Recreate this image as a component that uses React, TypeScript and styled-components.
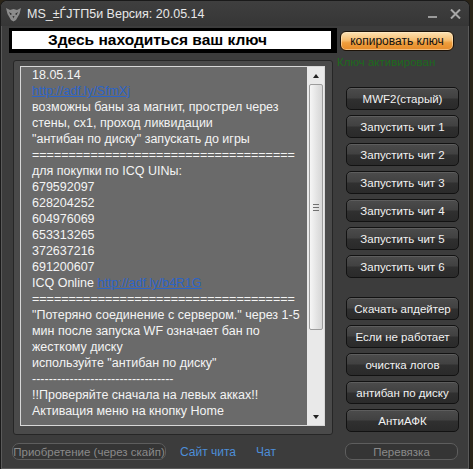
import React from 'react'
import styled, { createGlobalStyle } from 'styled-components'

const Global = createGlobalStyle`
    html, body {
        margin: 0;
        padding: 0;
        background: #2a2418;
    }
    #root {
        width: 473px;
        height: 469px;
        overflow: hidden;
    }
`

const Window = styled.div`
    width: 470px;
    height: 469px;
    box-sizing: border-box;
    background: #3c3c3c;
    border: 1px solid #1a1a1a;
    border-bottom: none;
    border-radius: 7px 7px 0 0;
    box-shadow: inset 0 0 0 1px #5a5a5a;
    display: flex;
    flex-direction: column;
    overflow: hidden;
    font-family: "Liberation Sans", Arial, sans-serif;
`

const TitleBar = styled.div`
    height: 25px;
    display: flex;
    align-items: center;
    padding: 0 8px 0 4px;
    background: linear-gradient(#3f3f3f, #363636);
    color: #e8e8e8;
    font-size: 12.5px;
    .title{
        margin-left: 5px;
        margin-top: 1px;
    }
    .ctrls{
        margin-left: auto;
        display: flex;
        align-items: center;
        gap: 13px;
        color: #a0a0a0;
    }
`

const Body = styled.div`
    flex: 1;
    display: flex;
    flex-direction: column;
    padding: 2px 0 0 8px;
`

const MainRow = styled.div`
    display: flex;
`

const LeftCol = styled.div`
    width: 328px;
    display: flex;
    flex-direction: column;
`

const KeyField = styled.div`
    height: 25px;
    box-sizing: border-box;
    background: #fff;
    border-style: solid;
    border-color: #000;
    border-width: 3px 6px 4px 3px;
    display: flex;
    align-items: center;
    padding-left: 36px;
    font-weight: bold;
    font-size: 15.5px;
    color: #000;
`

const TextFrame = styled.div`
    margin: 7px 0 0 4px;
    width: 320px;
    height: 375px;
    box-sizing: border-box;
    border: 1px solid #262626;
    border-radius: 3px;
    background: #4a4a4a;
    padding: 5px 7px 8px 6px;
    display: flex;
`

const TextArea = styled.div`
    flex: 1;
    display: flex;
    border: 1px solid #d8d8d8;
    background: #6a6a6a;
    overflow: hidden;
`

const Content = styled.div`
    flex: 1;
    padding: 0 0 0 11px;
    font-size: 12.5px;
    line-height: 16px;
    color: #f4f4f4;
    white-space: nowrap;
    p{
        margin: 0;
    }
    a{
        color: #2c64c8;
        text-decoration: underline;
    }
`

const ScrollBar = styled.div`
    width: 17px;
    background: #e9e9e9;
    display: flex;
    flex-direction: column;
    align-items: center;
`

const Arrow = styled.div<{ $down?: boolean }>`
    height: 17px;
    width: 17px;
    display: flex;
    align-items: center;
    justify-content: center;
    &::after{
        content: '';
        border-left: 3.5px solid transparent;
        border-right: 3.5px solid transparent;
        ${p => p.$down ? 'border-top: 4px solid #222;' : 'border-bottom: 4px solid #222;'}
    }
`

const Thumb = styled.div`
    width: 14px;
    height: 246px;
    box-sizing: border-box;
    border: 1px solid #9c9c9c;
    border-radius: 2px;
    background: linear-gradient(90deg, #f6f6f6, #e2e2e2 60%, #d6d6d6);
    display: flex;
    flex-direction: column;
    align-items: center;
    justify-content: center;
    gap: 2px;
    span{
        width: 6px;
        height: 1px;
        background: #707070;
    }
`

const Spacer = styled.div<{ $w?: number }>`
    flex: ${p => p.$w ? 'none' : 1};
    width: ${p => p.$w ? `${p.$w}px` : 'auto'};
`

const RightCol = styled.div`
    margin-left: 3px;
    width: 120px;
    display: flex;
    flex-direction: column;
`

const CopyButton = styled.div`
    margin-top: 3px;
    width: 114px;
    height: 20px;
    box-sizing: border-box;
    border: 1px solid #1c1208;
    border-radius: 6px;
    background: linear-gradient(#fde2b4 0%, #f7bf72 45%, #ee9d3c 60%, #e68a28 100%);
    box-shadow: inset 0 0 0 1px rgba(255,240,210,0.5);
    display: flex;
    align-items: center;
    justify-content: center;
    font-size: 12px;
    color: #111;
`

const Status = styled.div`
    margin: 4px 0 0 -3px;
    height: 14px;
    line-height: 14px;
    font-size: 11.5px;
    color: #1c6a1c;
    white-space: nowrap;
`

const ButtonGroup = styled.div<{ $top: number }>`
    margin: ${p => p.$top}px 0 0 6px;
    display: flex;
    flex-direction: column;
    gap: 5px;
`

const Button = styled.div`
    width: 113px;
    height: 23px;
    flex: none;
    box-sizing: border-box;
    border: 1px solid #121212;
    border-radius: 5px;
    background: linear-gradient(#4c4c4c 0%, #414141 48%, #303030 52%, #2a2a2a 100%);
    box-shadow: inset 0 1px 0 rgba(255,255,255,0.1);
    display: flex;
    align-items: center;
    justify-content: center;
    font-size: 11.5px;
    color: #f2f2f2;
    white-space: nowrap;
`

const Footer = styled.div`
    margin-top: 8px;
    display: flex;
    align-items: center;
`

const DisabledButton = styled.div<{ $w: number }>`
    width: ${p => p.$w}px;
    height: 17px;
    flex: none;
    box-sizing: border-box;
    border: 1px solid #5e5e5e;
    border-radius: 7px;
    background: #353535;
    display: flex;
    align-items: center;
    justify-content: center;
    font-size: 11.5px;
    color: #8a8a8a;
    white-space: nowrap;
    overflow: hidden;
`

const FooterLink = styled.a<{ $gap: number }>`
    margin-left: ${p => p.$gap}px;
    font-size: 12px;
    color: #4d8ed8;
    text-decoration: none;
    white-space: nowrap;
`

const Logo = () => (
    <svg width="17" height="16" viewBox="0 0 17 16">
        <path d="M1 2 L5 4 L8.5 3 L12 4 L16 2 L14.5 8 L11 14 L8.5 15.5 L6 14 L2.5 8 Z" fill="#8c8c8c" />
        <path d="M4 6 L7 8 L5.5 9 Z M13 6 L10 8 L11.5 9 Z" fill="#2a2a2a" />
        <path d="M7.5 10 L8.5 12.5 L9.5 10 Z" fill="#3a3a3a" />
    </svg>
)

const lines: React.ReactNode[] = [
    '18.05.14',
    <a key="l1">http://adf.ly/SfmXj</a>,
    'возможны баны за магнит, прострел через',
    'стены, сх1, проход ликвидации',
    '"антибан по диску" запускать до игры',
    '='.repeat(36),
    'для покупки по ICQ UINы:',
    '679592097',
    '628204252',
    '604976069',
    '653313265',
    '372637216',
    '691200607',
    <>ICQ Online <a>http://adf.ly/b4R1G</a></>,
    '='.repeat(36),
    '"Потеряно соединение с сервером." через 1-5',
    'мин после запуска WF означает бан по',
    'жесткому диску',
    'используйте "антибан по диску"',
    '-'.repeat(34),
    '!!Проверяйте сначала на левых акках!!',
    'Активация меню на кнопку Home',
]

const cheats = ['MWF2(старый)', 'Запустить чит 1', 'Запустить чит 2', 'Запустить чит 3', 'Запустить чит 4', 'Запустить чит 5', 'Запустить чит 6']
const tools = ['Скачать апдейтер', 'Если не работает', 'очистка логов', 'антибан по диску', 'АнтиАФК']

const App: React.FC = () => {
    return (
        <>
            <Global />
            <Window>
                <TitleBar>
                    <Logo />
                    <span className='title'>MS_±ЃЈТП5и Версия: 20.05.14</span>
                    <div className='ctrls'>
                        <svg width="9" height="10" viewBox="0 0 9 10"><rect x="0" y="7" width="9" height="2" fill="#9a9a9a" /></svg>
                        <svg width="11" height="10" viewBox="0 0 11 10"><path d="M1 0.5 L10 9.5 M10 0.5 L1 9.5" stroke="#a8a8a8" strokeWidth="2" /></svg>
                    </div>
                </TitleBar>
                <Body>
                    <MainRow>
                        <LeftCol>
                            <KeyField>Здесь находиться ваш ключ</KeyField>
                            <TextFrame>
                                <TextArea>
                                    <Content>
                                        {lines.map((l, i) => <p key={i}>{l}</p>)}
                                    </Content>
                                    <ScrollBar>
                                        <Arrow />
                                        <Thumb><span /><span /><span /></Thumb>
                                        <Spacer />
                                        <Arrow $down />
                                    </ScrollBar>
                                </TextArea>
                            </TextFrame>
                        </LeftCol>
                        <RightCol>
                            <CopyButton>копировать ключ</CopyButton>
                            <Status>Ключ активирован</Status>
                            <ButtonGroup $top={18}>
                                {cheats.map(c => <Button key={c}>{c}</Button>)}
                            </ButtonGroup>
                            <ButtonGroup $top={19}>
                                {tools.map(c => <Button key={c}>{c}</Button>)}
                            </ButtonGroup>
                        </RightCol>
                    </MainRow>
                    <Footer>
                        <Spacer $w={3} />
                        <DisabledButton $w={154}>Приобретение (через скайп)</DisabledButton>
                        <FooterLink $gap={14}>Сайт чита</FooterLink>
                        <FooterLink $gap={20}>Чат</FooterLink>
                        <Spacer />
                        <DisabledButton $w={113}>Перевязка</DisabledButton>
                        <Spacer $w={11} />
                    </Footer>
                </Body>
            </Window>
        </>
    )
}

export default App
